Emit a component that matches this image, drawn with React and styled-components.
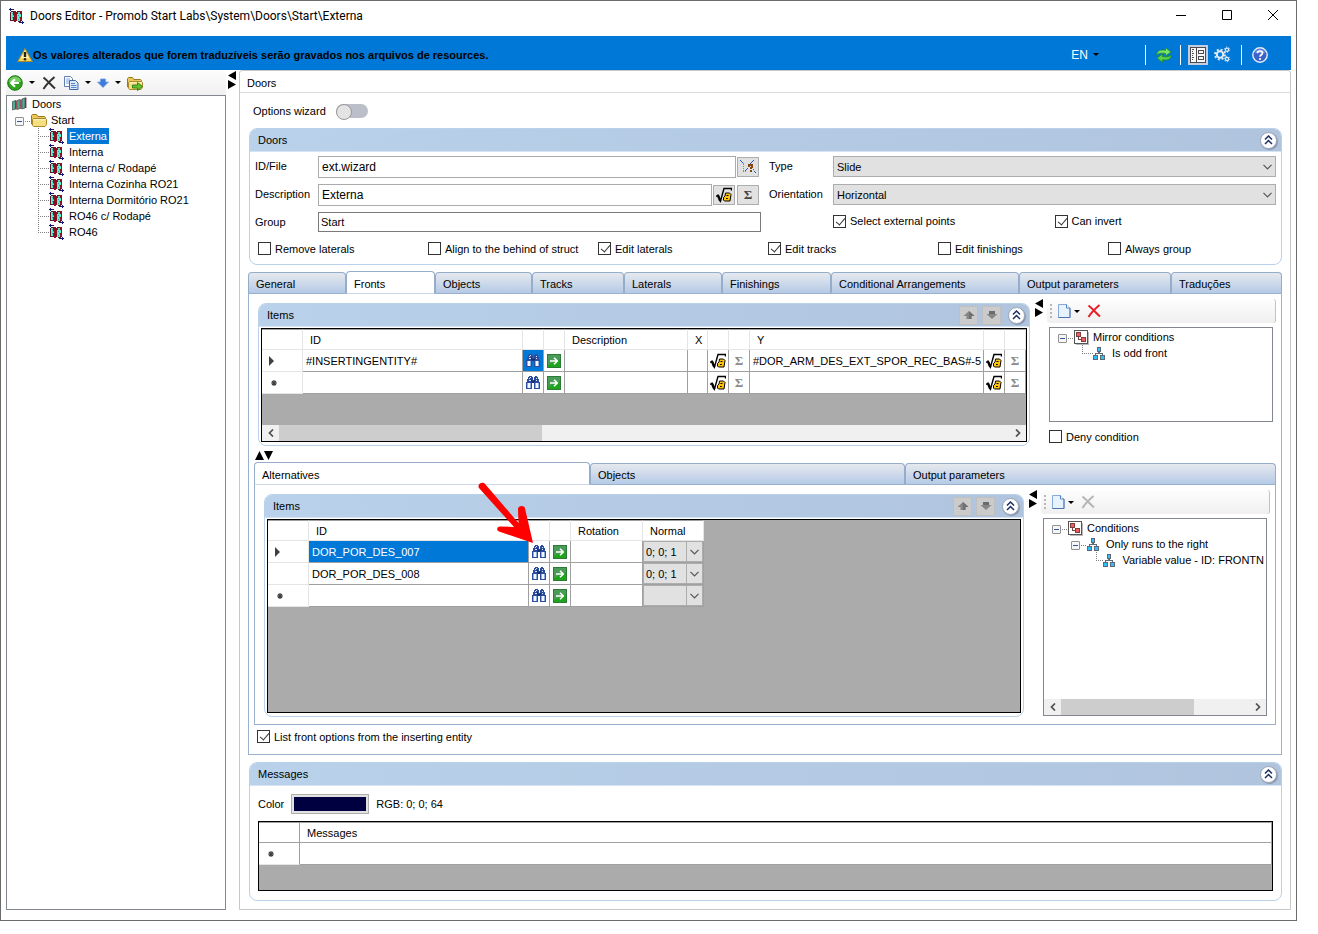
import React from 'react'
import styled, { createGlobalStyle, css } from 'styled-components'

const GlobalStyle = createGlobalStyle`
  * { box-sizing: border-box; }
  body {
    margin: 0;
    background: #fff;
    color: #000;
    font-family: 'Liberation Sans', Arial, sans-serif;
    font-size: 11px;
    line-height: 16px;
  }
  button, input, select { font: inherit; color: inherit; margin: 0; }
  button { padding: 0; border: 0; background: none; }
  svg { display: block; flex: none; }
`;

/* ---------- icons ---------- */

const DoorIcon = () => (
  <svg width="16" height="16" viewBox="0 0 16 16" shapeRendering="crispEdges">
    <path d="M2 4h4v9H2zM8 4h4v9H8z" fill="#5ff0cc" />
    <path d="M3 5h1v1H3zM4 7h1v1H4zM3 9h1v1H3zM4 11h1v1H4zM10 5h1v1h-1zM9 7h1v1H9zM10 9h1v1h-1zM9 11h1v1H9z" fill="#3a9fc4" />
    <path d="M1 4h1v9H1zM2 3h3v1H2zM2 12h3v1H2zM8 3h4v1H8zM9 13h3v1H9z" fill="#5a1a28" />
    <path d="M4 4h1V3h2v11H5v-1H4V9h1V7H4zM7 4h2v2H8v7H7zM11 3h2v10h-2V9h1V6h-1z" fill="#8b1020" />
    <path d="M0 1h1V0h1v1h3v1H2v1H1V2H0zM10 14h3v-1h1v1h1v1h-1v1h-1v-1h-3z" fill="#10187c" />
  </svg>
)

const DoorsRootIcon = () => (
  <svg width="16" height="16" viewBox="0 0 16 16">
    <path d="M.5 5.500l3-1v8.500l-3 1zM5 4.500l3-1v9l-3 1zM10 3l3-1v10l-3 1z" fill="#4fae9b" stroke="#4d5a55" strokeWidth=".8" />
    <path d="M4 4.500v9M9 3.500v9.500M13.700 1.500V12" stroke="#8a2733" strokeWidth="1.400" />
  </svg>
)

const WarningIcon = () => (
  <svg width="16" height="16" viewBox="0 0 16 16">
    <path d="M8 1.500L15.300 14.500H.7z" fill="#f6d55a" stroke="#a98a28" strokeLinejoin="round" />
    <path d="M8 3.500L12 11H4z" fill="#fff3b5" />
    <path d="M8 5v5" stroke="#222" strokeWidth="2.400" />
    <circle cx="8" cy="12.200" r="1.300" fill="#222" />
  </svg>
)

const BackIcon = () => (
  <svg width="16" height="16" viewBox="0 0 16 16">
    <circle cx="8" cy="8" r="7.300" fill="#2fa51d" stroke="#1c7413" />
    <path d="M2 7a6 5.500 0 0 1 12 0z" fill="#77cf62" />
    <path d="M12 8H4.500M8 4.200L4.200 8L8 11.800" fill="none" stroke="#fff" strokeWidth="2.200" />
  </svg>
)

const CrossIcon = ({ color = '#333', size = 14, weight = 2 }) => (
  <svg width={size} height={size} viewBox="0 0 14 14">
    <path d="M1.500 1.500C5 4 9 9 13 12.500M12.500 1C9 4 4 9 1.500 13" fill="none" stroke={color} strokeWidth={weight} />
  </svg>
)

const CopyIcon = () => (
  <svg width="16" height="16" viewBox="0 0 16 16">
    <path d="M1.500 1.500h6l2 2v8h-8z" fill="#fff" stroke="#5f7fb5" />
    <path d="M3 4h4M3 6h5M3 8h5" stroke="#7da0d6" />
    <path d="M6.500 5.500h6l2.500 2.500v6.500h-8.500z" fill="#dce9fb" stroke="#4468a8" />
    <path d="M8 8.500h4M8 10.500h5.500M8 12.500h5.500" stroke="#5a84c8" />
  </svg>
)

const BlueDownIcon = () => (
  <svg width="12" height="10" viewBox="0 0 12 10">
    <path d="M3.500 1h5v3h3L6 9.500L.5 4h3z" fill="#3f7bd8" stroke="#6ea0e8" strokeWidth=".8" />
  </svg>
)

const FolderIcon = ({ arrow }) => (
  <svg width="16" height="16" viewBox="0 0 16 16">
    <path d="M.5 12V3.500l1-1h4l1.500 2h6.500l1 1V12z" fill="#e9c75a" stroke="#9a7a20" />
    <path d="M2.500 14.500l-1-1V7.500l1-1h12l1 1v5l-1.500 2z" fill="#f5dd80" stroke="#a98a2c" />
    <path d="M3 7.800h11.500" stroke="#fff6c8" />
    {arrow && <path d="M5.500 10h5V7.500l5 4l-5 4V13h-5z" fill="#5fc22d" stroke="#2d7a14" strokeWidth=".9" />}
  </svg>
)

const Caret = () => (
  <svg width="6" height="3" viewBox="0 0 6 3"><path d="M0 0h6L3 3z" fill="#000" /></svg>
)

const RefreshIcon = () => (
  <svg width="16" height="16" viewBox="0 0 16 16">
    <path d="M.6 8C1 3.500 4.500 2.500 9.500 3.200V.6L15 5L9.500 9V6.500C5.500 5.800 3 6 .6 8z" fill="#7be368" stroke="#218c22" strokeWidth=".8" />
    <path d="M15.400 8C15 12.500 11.500 13.500 6.500 12.800v2.600L1 11L6.500 7v2.500C10.500 10.200 13 10 15.400 8z" fill="#5bcf4a" stroke="#218c22" strokeWidth=".8" />
  </svg>
)

const FormIcon = () => (
  <svg width="16" height="16" viewBox="0 0 16 16" shapeRendering="crispEdges">
    <path d="M0 0h16v16H0z" fill="#4c4c4c" />
    <path d="M1 1h5v14H1zM7 1h8v14H7z" fill="#f7f7f7" />
    <path d="M2 2h2v1H2zM2 4h1v1H2zM2 6h2v1H2zM2 8h1v1H2zM2 10h2v1H2zM2 12h1v1H2zM8 3h6v4H8zM8 9h6v4H8z" fill="#4c4c4c" />
    <path d="M9 4h4v2H9zM9 10h4v2H9z" fill="#f7f7f7" />
  </svg>
)

const GearsIcon = () => (
  <svg width="17" height="17" viewBox="0 0 17 17" fill="none">
    <circle cx="6" cy="8.500" r="3.200" stroke="#e4edf7" strokeWidth="2" />
    <circle cx="6" cy="8.500" r="5" stroke="#e4edf7" strokeWidth="1.800" strokeDasharray="2 1.927" />
    <circle cx="13" cy="3.700" r="1.600" stroke="#e4edf7" strokeWidth="1.200" />
    <circle cx="13" cy="3.700" r="2.700" stroke="#e4edf7" strokeDasharray="1.200 1.627" />
    <circle cx="13" cy="13" r="1.600" stroke="#e4edf7" strokeWidth="1.200" />
    <circle cx="13" cy="13" r="2.700" stroke="#e4edf7" strokeDasharray="1.200 1.627" />
  </svg>
)

const HelpIcon = () => (
  <svg width="16" height="16" viewBox="0 0 16 16">
    <circle cx="8" cy="8" r="7.200" fill="#3a62c8" stroke="#e6edfa" strokeWidth="1.400" />
    <path d="M3 6a5.200 5 0 0 1 10 0z" fill="#7396e2" />
    <path d="M5.500 6.200C5.500 3.300 10.500 3.300 10.500 6C10.500 7.800 8 7.800 8 9.800" fill="none" stroke="#fff" strokeWidth="1.700" />
    <circle cx="8" cy="12" r="1.100" fill="#fff" />
  </svg>
)

const BinocularsIcon = () => (
  <svg width="16" height="14" viewBox="0 0 16 14" shapeRendering="crispEdges">
    <path d="M4 0h3v1h1v3h1V1h1V0h2v1h1v2h1v3h1v7H9V7H7v6H1V6h1V3h1V1h1z" fill="#2b4c9e" />
    <path d="M2 7h4v5H2zM10 7h4v5h-4z" fill="#8fabe0" />
    <path d="M3 7h2v5H3zM11 7h2v5h-2z" fill="#f2f6fd" />
    <path d="M4 2h1v1H4zM4 4h2v1H4zM11 2h1v1h-1zM11 4h1v1h-1zM5 1h1v1H5z" fill="#dce6f8" />
    <path d="M6 3h1v3H6zM9 4h1v2H9zM7 5h2v2H7z" fill="#15306f" />
  </svg>
)

const GoIcon = () => (
  <svg width="14" height="14" viewBox="0 0 14 14">
    <path d="M0 0h14v14H0z" fill="#2c7a35" />
    <path d="M1 1h12v12H1z" fill="#1fa51c" />
    <path d="M1 1h12v4L1 11z" fill="#4a9a58" />
    <path d="M3 7h7M7 3.700L10.300 7L7 10.300" fill="none" stroke="#fff" strokeWidth="1.600" />
  </svg>
)

const FormulaIcon = () => (
  <svg width="16" height="16" viewBox="0 0 16 16">
    <path d="M0 9.500L2 8L4.500 14L8 1.500H15.500V3.500" fill="none" stroke="#000" strokeWidth="1.400" />
    <path d="M2 8.500L4.300 14" stroke="#000" strokeWidth="2.400" />
    <path d="M9.500 6H13.500L15 7.500L14 14H8.500L7.500 13V10.500L9 9z" fill="#ffc20e" stroke="#000" strokeWidth="1" />
    <path d="M10.500 8.500h2M10 11.500h1.800" stroke="#000" strokeWidth="1" />
  </svg>
)

const PickIcon = () => (
  <svg width="16" height="16" viewBox="0 0 16 16" shapeRendering="crispEdges">
    <path d="M0 1h1v1H0zM1 2h1v1H1zM2 3h1v1H2zM13 1h1v1h-1zM12 2h1v1h-1zM11 3h1v1h-1zM10 4h1v1h-1zM7 9h1v1H7zM6 10h1v1H6zM5 11h1v1H5zM13 10h1v1h-1zM14 12h1v1h-1zM15 13h1v1h-1z" fill="#2456d6" />
    <path d="M3 4h1v2H3zM3 7h1v1H3zM3 9h1v1H3zM3 11h1v2H3zM5 12h1v1H5z" fill="#3fa2ea" />
    <path d="M8 5h5v4h-1v1h-2V8h1V7H10v1H8zM10 11h2v2h-2z" fill="#8a4510" />
  </svg>
)

const MoveIcon = ({ down }) => (
  <svg width="12" height="10" viewBox="0 0 12 10">
    {down
      ? <path d="M3.500 1h5v3h3L6 9L.5 4h3z" fill="#858585" />
      : <path d="M3.500 9h5V6h3L6 1L.5 6h3z" fill="#858585" />}
    {down ? <path d="M3 1h6v3H3z" fill="#6b6b6b" /> : <path d="M6 1l5.500 5h-3v3H6z" fill="#707070" />}
  </svg>
)

const ChevronsIcon = () => (
  <svg width="9" height="10" viewBox="0 0 9 10">
    <path d="M1 4.500L4.500 1L8 4.500M1 9L4.500 5.500L8 9" fill="none" stroke="#1b2f63" strokeWidth="1.500" />
  </svg>
)

const PageIcon = () => (
  <svg width="13" height="14" viewBox="0 0 13 14">
    <path d="M.5.5h8l3.500 3.500v9.500H.5z" fill="#e6f2fd" stroke="#88aad8" />
    <path d="M8.500.5V4H12" fill="#fff" stroke="#5580bd" />
    <path d="M12 4v9.500H.5" fill="none" stroke="#4c73b3" />
  </svg>
)

const RootNodeIcon = () => (
  <svg width="15" height="15" viewBox="0 0 15 15" shapeRendering="crispEdges">
    <path d="M2 2h13v13H2z" fill="#b9b9b9" />
    <path d="M0 0h14v14H0z" fill="#555" />
    <path d="M1 1h12v12H1z" fill="#fff" />
    <path d="M2 2h5v5H2zM7 7h5v5H7zM4 7h1v2h2v1H4z" fill="#7a4040" />
    <path d="M3 3h3v3H3zM8 8h3v3H8z" fill="#f45b5b" />
  </svg>
)

const NodeIcon = () => (
  <svg width="12" height="13" viewBox="0 0 12 13" shapeRendering="crispEdges">
    <path d="M4 0h4v5H4zM0 8h5v5H0zM7 8h5v5H7zM5 5h2v1h3v2H9V7H3v1H2V6h3z" fill="#5d6a72" />
    <path d="M5 1h2v3H5zM1 9h3v3H1zM8 9h3v3H8z" fill="#2fc0fa" />
  </svg>
)

const ChevronDown = () => (
  <svg width="9" height="6" viewBox="0 0 9 6">
    <path d="M.5.8L4.500 4.800L8.500.8" fill="none" stroke="#555" strokeWidth="1.200" />
  </svg>
)

const ScrollArrow = ({ right }) => (
  <svg width="6" height="8" viewBox="0 0 6 8">
    <path d={right ? 'M1 0.500L4.500 4L1 7.500' : 'M5 0.500L1.500 4L5 7.500'} fill="none" stroke="#505050" strokeWidth="1.700" />
  </svg>
)

const RowPointer = () => (
  <svg width="6" height="10" viewBox="0 0 6 10"><path d="M0 0l5 5l-5 5z" fill="#404040" /></svg>
)

const NewRowMark = () => (
  <svg width="10" height="6" viewBox="-4 0 10 6">
    <path d="M3 0v6M0 3h6M1 1l4 4M5 1L1 5" transform="translate(-2 0)" stroke="#404040" strokeWidth="1.200" />
  </svg>
)

/* ---------- window ---------- */

const Page = styled.div`
  min-height: 100vh;
  padding: 0 21px 13px 0;
  display: flex;
  flex-direction: column;
`;

const Window = styled.main`
  flex: 1;
  display: flex;
  flex-direction: column;
  border: 1px solid #6b6b6b;
  padding: 0 5px 10px;
`;

const TitleBar = styled.header`
  display: flex;
  align-items: center;
  height: 35px;
  padding: 0 12px 5px 3px;
  gap: 5px;
  h1 {
    flex: 1;
    margin: 0;
    font: 400 12px/16px Roboto, 'Liberation Sans', sans-serif;
  }
`;

const WindowButtons = styled.div`
  display: flex;
  gap: 34px;
`;

const Banner = styled.div`
  display: flex;
  align-items: center;
  height: 34px;
  padding: 3px 23px 0 11px;
  background: #0078d7;
  p {
    flex: 1;
    margin: 0;
    font-weight: 700;
  }
`;

const LangButton = styled.button`
  display: flex;
  align-items: center;
  gap: 5px;
  margin-right: 46px;
  color: #fff;
  font-size: 12px;
`;

const BannerTools = styled.div`
  display: flex;
  align-items: center;
`;

const BannerGroup = styled.div`
  display: flex;
  align-items: center;
  height: 20px;
  gap: 6px;
  padding: 0 ${(p) => p.$right || 8}px 0 ${(p) => p.$left || 10}px;
  border-left: 1px solid #fff;
  &:last-child { padding-right: 0; }
`;

const ToolButton = styled.button`
  display: flex;
  align-items: center;
  justify-content: center;
  min-width: 16px;
  ${(p) => p.$pressed && css`
    width: 20px;
    height: 20px;
    background: #c3cee0;
  `}
`;

const Workspace = styled.div`
  flex: 1;
  display: flex;
`;

const Sidebar = styled.aside`
  display: flex;
  flex-direction: column;
  width: 220px;
`;

const Toolbar = styled.div`
  display: flex;
  align-items: center;
  height: ${(p) => (p.$small ? 24 : 25)}px;
  padding-left: ${(p) => (p.$small ? 3 : 1)}px;
  gap: 6px;
  background: linear-gradient(#fdfdfd, #f0f0f0);
  ${(p) => p.$small && css`
    border-right: 1px solid #c2c2c2;
    border-radius: 3px;
  `}
`;

const Grip = styled.span`
  width: 2px;
  height: 15px;
  background: repeating-linear-gradient(#b8b8b8 0 2px, transparent 2px 4px);
`;

const WithCaret = styled.button`
  display: flex;
  align-items: center;
  gap: ${(p) => (p.$tight ? 3 : 6)}px;
`;

const TreeBox = styled.div`
  display: flex;
  flex-direction: column;
  flex: ${(p) => (p.$height ? 'none' : 1)};
  height: ${(p) => (p.$height ? p.$height + 'px' : 'auto')};
  border: 1px solid #828790;
  overflow: hidden;
  ${(p) => p.$side && css`
    margin: 4px 3px 0 2px;
    ul { padding-top: 1px; }
  `}
`;

const TreeList = styled.ul`
  flex: 1;
  margin: 0;
  padding: 0 0 0 5px;
  list-style: none;
`;

const TreeRow = styled.li`
  display: flex;
  align-items: center;
  height: 16px;
  white-space: nowrap;
  padding-left: ${(p) => p.$indent || 0}px;
`;

const Elbow = styled.span`
  width: 11px;
  height: 16px;
  background:
    repeating-linear-gradient(#808080 0 1px, transparent 1px 2px) 0 0 / 1px ${(p) => (p.$last ? 8 : 16)}px no-repeat,
    repeating-linear-gradient(90deg, #808080 0 1px, transparent 1px 2px) 0 8px / 11px 1px no-repeat;
`;

const Expander = styled.button`
  width: 9px;
  height: 9px;
  margin-top: 2px;
  border: 1px solid #919191;
  border-radius: 1px;
  background: linear-gradient(#3353a4, #3353a4) center / 5px 1px no-repeat #f6f6f6;
`;

const Dots = styled.span`
  width: 5px;
  height: 1px;
  margin: 2px 1px 0 1px;
  background: repeating-linear-gradient(90deg, #808080 0 1px, transparent 1px 2px);
`;

const NodeText = styled.span`
  margin-left: ${(p) => p.$gap || 2}px;
  padding: 0 2px;
  ${(p) => p.$selected && css`
    background: #0078d7;
    color: #fff;
  `}
`;

const Splitter = styled.div`
  flex: none;
  width: 13px;
  padding: 1px 0 0 1px;
`;

const Editor = styled.section`
  flex: 1;
  min-width: 0;
  border: 1px solid #c8c8c8;
  border-radius: 3px 3px 0 0;
  h2 {
    margin: 0;
    height: 22px;
    padding: 4px 7px 0;
    font-size: 11px;
    font-weight: 400;
    border-bottom: 1px solid #dcdcdc;
  }
`;

const EditorBody = styled.div`
  padding: 0 8px 8px;
`;

const WizardLine = styled.label`
  display: flex;
  align-items: center;
  height: 35px;
  padding-left: 5px;
  gap: 10px;
  input {
    appearance: none;
    width: 32px;
    height: 14px;
    border-radius: 7px;
    background: #bbbfca;
  }
  input::before {
    content: '';
    display: block;
    width: 14px;
    height: 14px;
    border: 1px solid #999;
    border-radius: 50%;
    background: #e4e4e4;
  }
`;

/* ---------- group box ---------- */

const GroupBox = styled.section`
  border: 1px solid #b9d1ea;
  border-radius: 8px;
  overflow: hidden;
  ${(p) => p.$fill && css`
    flex: 1;
    min-width: 0;
    display: flex;
    flex-direction: column;
    margin-top: 4px;
  `}
  ${(p) => p.$inset && css`margin-left: 1px;`}
`;

const GroupHead = styled.div`
  display: flex;
  align-items: center;
  height: 23px;
  padding: 0 4px 0 8px;
  gap: 4px;
  background: linear-gradient(90deg, #b9d1ea, #b0c4de);
  border-bottom: 1px solid #d5e4f3;
  h3 {
    flex: 1;
    margin: 0;
    font-size: 11px;
    font-weight: 400;
  }
`;

const RoundButton = styled.button`
  display: flex;
  align-items: center;
  justify-content: center;
  width: 17px;
  height: 17px;
  margin-left: 3px;
  border-radius: 50%;
  border: 1px solid #9aa5b8;
  background: #fff;
  box-shadow: 1px 1px 1px #8796ae;
`;

const MoveButton = styled.button`
  display: flex;
  align-items: center;
  justify-content: center;
  width: 19px;
  height: 19px;
  border: 1px solid #bfbfbf;
  background: #cbcbcb;
`;

function Group({ title, children, movable, ...rest }) {
  return (
    <GroupBox {...rest}>
      <GroupHead>
        <h3>{title}</h3>
        {movable && <MoveButton aria-label="Move up"><MoveIcon /></MoveButton>}
        {movable && <MoveButton aria-label="Move down"><MoveIcon down /></MoveButton>}
        <RoundButton aria-label="Collapse"><ChevronsIcon /></RoundButton>
      </GroupHead>
      {children}
    </GroupBox>
  )
}

/* ---------- form ---------- */

const Fields = styled.div`
  display: grid;
  grid-template-columns: 63px minmax(0, 1fr) 8px 64px minmax(0, 1fr);
  row-gap: 6px;
  padding: 4px 5px 0;
`;

const FieldLabel = styled.label`
  grid-column: ${(p) => (p.$right ? 4 : 1)};
  padding-top: 2px;
  line-height: 16px;
  white-space: nowrap;
`;

const Field = styled.div`
  display: flex;
  align-items: center;
  gap: 1px;
  padding-right: ${(p) => p.$end || 0}px;
`;

const TextInput = styled.input`
  flex: 1;
  min-width: 0;
  height: ${(p) => (p.$small ? 20 : 22)}px;
  padding: 0 ${(p) => (p.$small ? 2 : 3)}px;
  border: 1px solid ${(p) => (p.$small ? '#7a7a7a' : '#ababab')};
  border-radius: 0;
  background: #fff;
  font-size: ${(p) => (p.$small ? 11 : 12)}px;
`;

const SquareButton = styled.button`
  display: flex;
  align-items: center;
  justify-content: center;
  width: 22px;
  height: 20px;
  border: 1px solid #adadad;
  background: #e1e1e1;
  color: #444;
  & + & { margin-left: 1px; }
`;

const Sigma = styled.span`
  font: 700 13px/16px 'Liberation Serif', serif;
  color: ${(p) => (p.$dim ? '#8a8a8a' : '#444')};
`;

const SelectWrap = styled.div`
  position: relative;
  flex: 1;
  align-self: flex-start;
  select {
    display: block;
    appearance: none;
    width: 100%;
    height: 21px;
    padding: 0 18px 0 3px;
    border: 1px solid #adadad;
    border-radius: 0;
    background: #e1e1e1;
  }
  svg {
    position: absolute;
    right: 4px;
    top: 8px;
    pointer-events: none;
  }
  ${(p) => p.$cell && css`
    select { background: linear-gradient(#adadad, #adadad) right 15px top / 1px 100% no-repeat #e1e1e1; padding-left: 2px; }
  `}
`;

const CheckLabel = styled.label`
  display: flex;
  align-items: center;
  gap: 4px;
  height: ${(p) => (p.$tall ? 18 : 13)}px;
  white-space: nowrap;
  input {
    appearance: none;
    flex: none;
    width: 13px;
    height: 13px;
    border: 1px solid #333;
    background: #fff;
  }
  input:checked::before {
    content: '';
    display: block;
    width: 4px;
    height: 8px;
    margin: 0 0 0 4px;
    border: solid #333;
    border-width: 0 1px 1px 0;
    transform: rotate(40deg);
  }
`;

const CheckRow = styled.div`
  display: grid;
  grid-template-columns: repeat(6, 1fr);
  padding: 10px 3px 9px 8px;
`;

const CheckPair = styled.div`
  grid-column: 5;
  display: grid;
  grid-template-columns: 1fr 1fr;
`;

const Check = ({ label, checked, ...rest }) => (
  <CheckLabel {...rest}>
    <input type="checkbox" defaultChecked={checked} />
    {label}
  </CheckLabel>
)

/* ---------- tabs ---------- */

const TabStrip = styled.div`
  display: grid;
  grid-template-columns: ${(p) => p.$columns};
  align-items: end;
  height: 22px;
`;

const Tab = styled.button`
  height: 21px;
  min-width: 0;
  padding: 2px 7px 0;
  text-align: left;
  white-space: nowrap;
  border: 1px solid #95accb;
  border-bottom: 0;
  border-radius: 4px 4px 0 0;
  background: linear-gradient(#e6e9ee, #b5cae6);
  ${(p) => p.$active && css`
    position: relative;
    height: 23px;
    margin-bottom: -1px;
    background: #fff;
    border-bottom: 1px solid #cad8ea;
  `}
`;

const TabPanel = styled.div`
  border: 1px solid #9ab0cf;
`;

const Tabs = ({ items, active }) => (
  <TabStrip role="tablist" $columns={items.map(([, size]) => `minmax(0, ${size}fr)`).join(' ')}>
    {items.map(([name]) => (
      <Tab key={name} role="tab" aria-selected={name === active} $active={name === active}>{name}</Tab>
    ))}
  </TabStrip>
)

const MainTabs = styled.div`
  margin: 6px 0 7px;
`;

const SplitRow = styled.div`
  display: flex;
  padding: 5px 5px ${(p) => p.$bottom || 0}px 9px;
`;

const SplitMid = styled.div`
  flex: none;
  width: 17px;
  padding-left: 4px;
`;

const Side = styled.div`
  flex: none;
  width: 229px;
`;

const SideCheck = styled.div`
  padding: 8px 2px 0;
`;

const VSplit = styled.div`
  padding: 5px 6px 1px;
`;

const FrontOption = styled.div`
  padding: 5px 8px 11px;
`;

const Nested = styled.div`
  position: relative;
  margin: 0 5px;
`;

const Callout = styled.div`
  position: absolute;
  left: 220px;
  top: 16px;
  z-index: 2;
  pointer-events: none;
`;

/* ---------- data grids ---------- */

const GridBox = styled.div`
  display: flex;
  flex-direction: column;
  flex: 1;
  min-height: ${(p) => p.$height}px;
  margin: ${(p) => p.$margin || '1px 2px 3px'};
  border: 1px solid #000;
  background: #ababab;
  overflow: hidden;
`;

const GridTable = styled.table`
  width: ${(p) => p.$width || '100%'};
  table-layout: fixed;
  border-collapse: separate;
  border-spacing: 0;
  background: #fff;
  th, td {
    height: 22px;
    padding: 0 0 0 3px;
    text-align: left;
    font-weight: 400;
    white-space: nowrap;
    overflow: hidden;
    border: solid #a0a0a0;
    border-width: 0 1px 1px 0;
  }
  thead th {
    height: 21px;
    padding-left: 7px;
    border-color: ${(p) => (p.$solid ? '#a0a0a0' : '#e5e5e5')};
    border-top: 1px solid #a0a0a0;
  }
  tbody th {
    padding-left: 7px;
    border-right-color: ${(p) => (p.$solid ? '#a0a0a0' : '#e5e5e5')};
    border-bottom-color: #e5e5e5;
  }
`;

const IconCell = styled.td`
  && { padding: 0; }
  background: ${(p) => (p.$selected ? '#0078d7' : '#fff')};
  button {
    display: flex;
    align-items: center;
    justify-content: center;
    width: 100%;
    height: 20px;
  }
`;

const SelectCell = styled.td`
  && { padding: 0; }
`;

const SelectedCell = styled.td`
  background: #0078d7;
  color: #fff;
`;

const ScrollBar = styled.div`
  display: flex;
  height: 16px;
  margin-top: auto;
  background: #f0f0f0;
  button {
    display: flex;
    align-items: center;
    justify-content: center;
    width: 17px;
  }
`;

const ScrollTrack = styled.div`
  flex: 1;
  div {
    width: ${(p) => p.$thumb}%;
    height: 16px;
    background: #cdcdcd;
  }
`;

const HScroll = ({ thumb }) => (
  <ScrollBar>
    <button aria-label="Scroll left"><ScrollArrow /></button>
    <ScrollTrack $thumb={thumb}><div /></ScrollTrack>
    <button aria-label="Scroll right"><ScrollArrow right /></button>
  </ScrollBar>
)

const ColorLine = styled.div`
  display: flex;
  align-items: center;
  padding: 8px 8px 0;
  gap: 7px;
`;

const ColorButton = styled.button`
  width: 78px;
  height: 20px;
  border: 1px solid #adadad;
  padding: 2px;
  background: #e1e1e1;
  span {
    display: block;
    height: 14px;
    background: #000040;
  }
`;

const SplitArrows = () => (
  <svg width="10" height="18" viewBox="0 0 10 18"><path d="M9 0v9L1 4.500zM1 9v9l8-4.500z" fill="#000" /></svg>
)

const IconButtonCell = ({ label, selected, children }) => (
  <IconCell $selected={selected}><button aria-label={label}>{children}</button></IconCell>
)

const doorItems = ['Externa', 'Interna', 'Interna c/ Rodapé', 'Interna Cozinha RO21', 'Interna Dormitório RO21', 'RO46 c/ Rodapé', 'RO46']

const mainTabs = [
  ['General', 98], ['Fronts', 89], ['Objects', 97], ['Tracks', 92], ['Laterals', 98],
  ['Finishings', 109], ['Conditional Arrangements', 188], ['Output parameters', 152], ['Traduções', 111],
]

const frontTabs = [['Alternatives', 336], ['Objects', 315], ['Output parameters', 371]]

const checks = [
  ['Remove laterals', false], ['Align to the behind of struct', false], ['Edit laterals', true],
  ['Edit tracks', true], ['Edit finishings', false], ['Always group', false],
]

const fronts = [
  { id: '#INSERTINGENTITY#', y: '#DOR_ARM_DES_EXT_SPOR_REC_BAS#-5', current: true },
  { id: '', y: '' },
]

const alternatives = [
  { id: 'DOR_POR_DES_007', normal: '0; 0; 1', current: true },
  { id: 'DOR_POR_DES_008', normal: '0; 0; 1' },
  { id: '', normal: '', fresh: true },
]

function DoorTree() {
  return (
    <TreeBox>
      <TreeList>
        <TreeRow><DoorsRootIcon /><NodeText>Doors</NodeText></TreeRow>
        <TreeRow $indent={3}>
          <Expander aria-label="Collapse Start" /><Dots /><FolderIcon /><NodeText>Start</NodeText>
        </TreeRow>
        {doorItems.map((name, i) => (
          <TreeRow key={name} $indent={26}>
            <Elbow $last={i === doorItems.length - 1} /><DoorIcon /><NodeText $selected={i === 0}>{name}</NodeText>
          </TreeRow>
        ))}
      </TreeList>
    </TreeBox>
  )
}

function ConditionBar({ disabled }) {
  return (
    <Toolbar $small>
      <Grip />
      <WithCaret $tight aria-label="New"><PageIcon /><Caret /></WithCaret>
      <ToolButton aria-label="Delete" disabled={disabled}>
        <CrossIcon color={disabled ? '#b5b5b5' : '#e8202a'} />
      </ToolButton>
    </Toolbar>
  )
}

function FrontsGrid() {
  return (
    <GridBox $height={114}>
      <GridTable>
        <colgroup>
          {[41, 220, 21, 21, 123, 20, 21, 21, 0, 21, 21].map((w, i) => (
            <col key={i} width={w || undefined} />
          ))}
        </colgroup>
        <thead>
          <tr>
            <th /><th>ID</th><th /><th /><th>Description</th><th>X</th><th /><th /><th>Y</th><th /><th />
          </tr>
        </thead>
        <tbody>
          {fronts.map((row) => (
            <tr key={row.id}>
              <th>{row.current ? <RowPointer /> : <NewRowMark />}</th>
              <td>{row.id}</td>
              <IconButtonCell label="Search" selected={row.current}><BinocularsIcon /></IconButtonCell>
              <IconButtonCell label="Go to"><GoIcon /></IconButtonCell>
              <td />
              <td />
              <IconButtonCell label="Formula"><FormulaIcon /></IconButtonCell>
              <IconButtonCell label="Sum"><Sigma $dim>Σ</Sigma></IconButtonCell>
              <td>{row.y}</td>
              <IconButtonCell label="Formula"><FormulaIcon /></IconButtonCell>
              <IconButtonCell label="Sum"><Sigma $dim>Σ</Sigma></IconButtonCell>
            </tr>
          ))}
        </tbody>
      </GridTable>
      <HScroll thumb={36} />
    </GridBox>
  )
}

function AlternativesGrid() {
  return (
    <GridBox $height={194}>
      <GridTable $width="436px">
        <colgroup>
          {[41, 220, 21, 21, 72, 61].map((w, i) => <col key={i} width={w} />)}
        </colgroup>
        <thead>
          <tr><th /><th>ID</th><th /><th /><th>Rotation</th><th>Normal</th></tr>
        </thead>
        <tbody>
          {alternatives.map((row) => {
            const IdCell = row.current ? SelectedCell : 'td'
            return (
              <tr key={row.id}>
                <th>{row.current && <RowPointer />}{row.fresh && <NewRowMark />}</th>
                <IdCell>{row.id}</IdCell>
                <IconButtonCell label="Search"><BinocularsIcon /></IconButtonCell>
                <IconButtonCell label="Go to"><GoIcon /></IconButtonCell>
                <td />
                <SelectCell>
                  <SelectWrap $cell>
                    <select aria-label="Normal" defaultValue={row.normal}><option>{row.normal}</option></select>
                    <ChevronDown />
                  </SelectWrap>
                </SelectCell>
              </tr>
            )
          })}
        </tbody>
      </GridTable>
    </GridBox>
  )
}

function App() {
  return (
    <Page>
      <GlobalStyle />
      <Window>
        <TitleBar>
          <DoorIcon />
          <h1>Doors Editor - Promob Start Labs\System\Doors\Start\Externa</h1>
          <WindowButtons>
            <button aria-label="Minimize">
              <svg width="12" height="12" viewBox="0 0 12 12"><path d="M1 5.500h10" stroke="#000" /></svg>
            </button>
            <button aria-label="Maximize">
              <svg width="12" height="12" viewBox="0 0 12 12"><path d="M1.500.5h9v9h-9z" fill="none" stroke="#000" /></svg>
            </button>
            <button aria-label="Close">
              <svg width="12" height="12" viewBox="0 0 12 12"><path d="M1 0l10 10M11 0L1 10" stroke="#000" /></svg>
            </button>
          </WindowButtons>
        </TitleBar>

        <Banner>
          <WarningIcon />
          <p>Os valores alterados que forem traduzíveis serão gravados nos arquivos de resources.</p>
          <LangButton>EN<Caret /></LangButton>
          <BannerTools>
            <BannerGroup>
              <ToolButton aria-label="Refresh"><RefreshIcon /></ToolButton>
            </BannerGroup>
            <BannerGroup $left={7} $right={10}>
              <ToolButton aria-label="Form view" $pressed><FormIcon /></ToolButton>
              <ToolButton aria-label="Settings"><GearsIcon /></ToolButton>
            </BannerGroup>
            <BannerGroup>
              <ToolButton aria-label="Help"><HelpIcon /></ToolButton>
            </BannerGroup>
          </BannerTools>
        </Banner>

        <Workspace>
          <Sidebar>
            <Toolbar>
              <WithCaret aria-label="New"><BackIcon /><Caret /></WithCaret>
              <ToolButton aria-label="Delete"><CrossIcon /></ToolButton>
              <WithCaret aria-label="Copy"><CopyIcon /><Caret /></WithCaret>
              <WithCaret aria-label="Move"><BlueDownIcon /><Caret /></WithCaret>
              <ToolButton aria-label="Export"><FolderIcon arrow /></ToolButton>
            </Toolbar>
            <DoorTree />
          </Sidebar>
          <Splitter><SplitArrows /></Splitter>

          <Editor>
            <h2>Doors</h2>
            <EditorBody>
              <WizardLine>
                Options wizard
                <input type="checkbox" role="switch" />
              </WizardLine>

              <Group title="Doors" $inset>
                <Fields>
                  <FieldLabel htmlFor="file">ID/File</FieldLabel>
                  <Field $end={2}>
                    <TextInput id="file" defaultValue="ext.wizard" />
                    <SquareButton aria-label="Pick file"><PickIcon /></SquareButton>
                  </Field>
                  <FieldLabel $right htmlFor="type">Type</FieldLabel>
                  <SelectWrap>
                    <select id="type" defaultValue="Slide"><option>Slide</option></select>
                    <ChevronDown />
                  </SelectWrap>

                  <FieldLabel htmlFor="description">Description</FieldLabel>
                  <Field $end={2}>
                    <TextInput id="description" defaultValue="Externa" />
                    <SquareButton aria-label="Formula"><FormulaIcon /></SquareButton>
                    <SquareButton aria-label="Sum"><Sigma>Σ</Sigma></SquareButton>
                  </Field>
                  <FieldLabel $right htmlFor="orientation">Orientation</FieldLabel>
                  <SelectWrap>
                    <select id="orientation" defaultValue="Horizontal"><option>Horizontal</option></select>
                    <ChevronDown />
                  </SelectWrap>

                  <FieldLabel htmlFor="group">Group</FieldLabel>
                  <Field>
                    <TextInput id="group" $small defaultValue="Start" />
                  </Field>
                  <CheckPair>
                    <Check label="Select external points" checked $tall />
                    <Check label="Can invert" checked $tall />
                  </CheckPair>
                </Fields>
                <CheckRow>
                  {checks.map(([label, on]) => <Check key={label} label={label} checked={on} />)}
                </CheckRow>
              </Group>

              <MainTabs>
                <Tabs items={mainTabs} active="Fronts" />
                <TabPanel>
                  <SplitRow>
                    <Group title="Items" movable $fill><FrontsGrid /></Group>
                    <SplitMid><SplitArrows /></SplitMid>
                    <Side>
                      <ConditionBar />
                      <TreeBox $side $height={95}>
                        <TreeList>
                          <TreeRow $indent={3}>
                            <Expander aria-label="Collapse conditions" /><Dots /><RootNodeIcon />
                            <NodeText $gap={2}>Mirror conditions</NodeText>
                          </TreeRow>
                          <TreeRow $indent={27}>
                            <Elbow $last /><NodeIcon /><NodeText $gap={5}>Is odd front</NodeText>
                          </TreeRow>
                        </TreeList>
                      </TreeBox>
                      <SideCheck><Check label="Deny condition" /></SideCheck>
                    </Side>
                  </SplitRow>
                  <VSplit>
                    <svg width="18" height="10" viewBox="0 0 18 10"><path d="M0 9h9L4.500 0zM9 0h9l-4.500 9z" fill="#000" /></svg>
                  </VSplit>

                  <Nested>
                    <Tabs items={frontTabs} active="Alternatives" />
                    <TabPanel>
                      <SplitRow $bottom={7}>
                        <Group title="Items" movable $fill><AlternativesGrid /></Group>
                        <SplitMid><SplitArrows /></SplitMid>
                        <Side>
                          <ConditionBar disabled />
                          <TreeBox $side $height={198}>
                            <TreeList>
                              <TreeRow $indent={3}>
                                <Expander aria-label="Collapse conditions" /><Dots /><RootNodeIcon />
                                <NodeText $gap={2}>Conditions</NodeText>
                              </TreeRow>
                              <TreeRow $indent={22}>
                                <Expander aria-label="Collapse condition" /><Dots /><NodeIcon />
                                <NodeText $gap={5}>Only runs to the right</NodeText>
                              </TreeRow>
                              <TreeRow $indent={47}>
                                <Elbow $last /><NodeIcon /><NodeText $gap={5}>Variable value - ID: FRONTN</NodeText>
                              </TreeRow>
                            </TreeList>
                            <HScroll thumb={71} />
                          </TreeBox>
                        </Side>
                      </SplitRow>
                    </TabPanel>
                    <Callout>
                      <svg width="64" height="72" viewBox="0 0 64 72">
                        <path
                          d="M6 5.500C8 4 10.500 4.500 11.500 6.500L44.500 45L44 31C44 27.500 50.500 27 51 30.500L59 65L25 53.500C22 52 23 48.500 26 48.500L40 49L5 10C4 8.500 4.500 6.500 6 5.500z"
                          fill="#fe0000"
                        />
                      </svg>
                    </Callout>
                  </Nested>
                  <FrontOption><Check label="List front options from the inserting entity" checked /></FrontOption>
                </TabPanel>
              </MainTabs>

              <Group title="Messages" $inset>
                <ColorLine>
                  <span>Color</span>
                  <ColorButton aria-label="Color"><span /></ColorButton>
                  <span>RGB: 0; 0; 64</span>
                </ColorLine>
                <GridBox $height={70} $margin="7px 8px 9px">
                  <GridTable $solid>
                    <colgroup><col width="41" /><col /></colgroup>
                    <thead><tr><th /><th>Messages</th></tr></thead>
                    <tbody><tr><th><NewRowMark /></th><td /></tr></tbody>
                  </GridTable>
                </GridBox>
              </Group>
            </EditorBody>
          </Editor>
        </Workspace>
      </Window>
    </Page>
  )
}

export default App
